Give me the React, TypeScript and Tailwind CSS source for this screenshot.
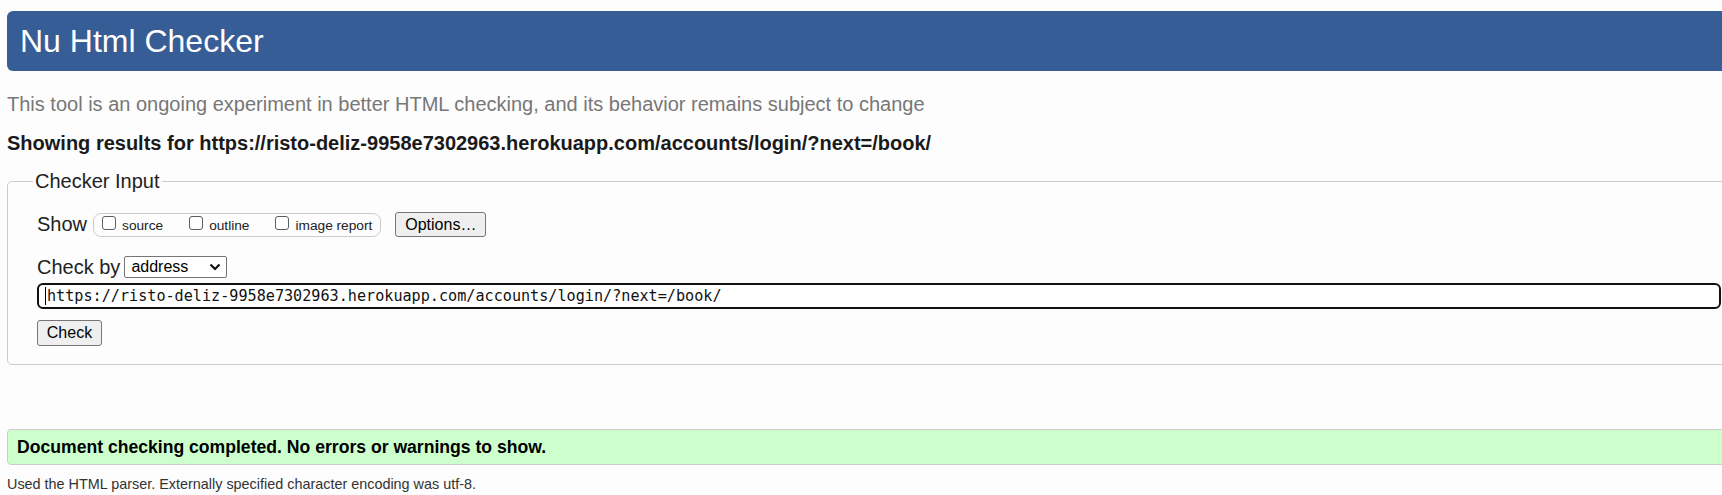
import type { ReactNode } from 'react'

const url = 'https://risto-deliz-9958e7302963.herokuapp.com/accounts/login/?next=/book/'

/** Windows-style unchecked box. */
function Box() {
  return <span className="mt-[1px] block h-[14px] w-[14px] shrink-0 rounded-[3px] border border-[#5f5f5f] bg-white" />
}

function ShowOption({ label, last }: { label: string; last?: boolean }) {
  return (
    <label className={`flex items-start gap-[6px] ${last ? '' : 'mr-[26px]'}`}>
      <Box />
      <span className="mt-[3px] text-[13.7px] leading-4 text-[#222]">{label}</span>
    </label>
  )
}

function NativeButton({ children, className = '' }: { children: ReactNode; className?: string }) {
  return (
    <button
      type="button"
      className={`flex items-center justify-center rounded-[3px] border border-[#767676] bg-[#efefef] text-[16px] leading-5 text-black ${className}`}
    >
      {children}
    </button>
  )
}

export default function App() {
  return (
    <div className="h-[495px] w-[1722px] overflow-hidden bg-[#fdfdfd] font-['Liberation_Sans',Arial,sans-serif]">
      <div className="w-[1758px] px-[7px] pt-[11px]">
        <h1 className="flex h-[60px] items-center rounded-[6px] bg-[#365d95] pl-[13px] text-[32px] leading-9 font-normal text-white">
          Nu Html Checker
        </h1>

        <p className="mt-[21px] text-[20px] leading-6 text-[#777]">
          This tool is an ongoing experiment in better HTML checking, and its behavior remains subject to change
        </p>
        <p className="mt-[15px] text-[20px] leading-6 font-bold text-[#1a1a1a]">Showing results for {url}</p>

        <fieldset className="mt-[14px] rounded-[5px] border border-[#ccc] pb-[18px] pl-[25px] pt-[19px]">
          <legend className="px-[2px] text-[20px] leading-6 text-[#222]">Checker Input</legend>
          <div className="pl-[4px] text-[#222]">
            <div className="flex h-[25px] items-center">
              <span className="-mt-[2px] text-[20px] leading-6">Show</span>
              <div className="ml-[6px] flex h-[24px] items-start rounded-[8px] border border-[#ccc] pl-[8px] pr-[8px] pt-px">
                <ShowOption label="source" />
                <ShowOption label="outline" />
                <ShowOption label="image report" last />
              </div>
              <NativeButton className="ml-[14px] h-[25px] w-[91px]">Options…</NativeButton>
            </div>

            <div className="mt-[19px] flex h-[22px] items-center">
              <span className="-mt-px text-[20px] leading-6">Check by</span>
              <div className="ml-[4px] flex h-[22px] w-[103px] items-center justify-between rounded-[2px] border border-[#767676] bg-white pl-[6px] pr-[4px]">
                <span className="text-[16px] leading-5 text-black">address</span>
                <svg width="12" height="8" viewBox="0 0 12 8" className="mr-[1px]">
                  <polyline points="1.5,1.5 6,6 10.5,1.5" fill="none" stroke="#111" strokeWidth="2.2" />
                </svg>
              </div>
            </div>

            <div className="mt-[5px] flex h-[26px] w-[1684px] items-center rounded-[6px] border-2 border-[#111] bg-white pl-[6px]">
              <span className="mr-px h-[18px] w-px bg-black" />
              <span className="font-['DejaVu_Sans_Mono',monospace] text-[15.15px] leading-5 text-[#111]">{url}</span>
            </div>

            <NativeButton className="mt-[11px] h-[26px] w-[65px]">Check</NativeButton>
          </div>
        </fieldset>

        <div className="mt-[64px] flex h-[36px] items-center rounded-[4px] border border-[#ccc] bg-[#ccffcc] pl-[9px]">
          <p className="text-[17.6px] leading-6 font-bold text-black">
            Document checking completed. No errors or warnings to show.
          </p>
        </div>
        <p className="mt-[10px] text-[14.4px] leading-[18px] text-[#333]">
          Used the HTML parser. Externally specified character encoding was utf-8.
        </p>
      </div>
    </div>
  )
}
